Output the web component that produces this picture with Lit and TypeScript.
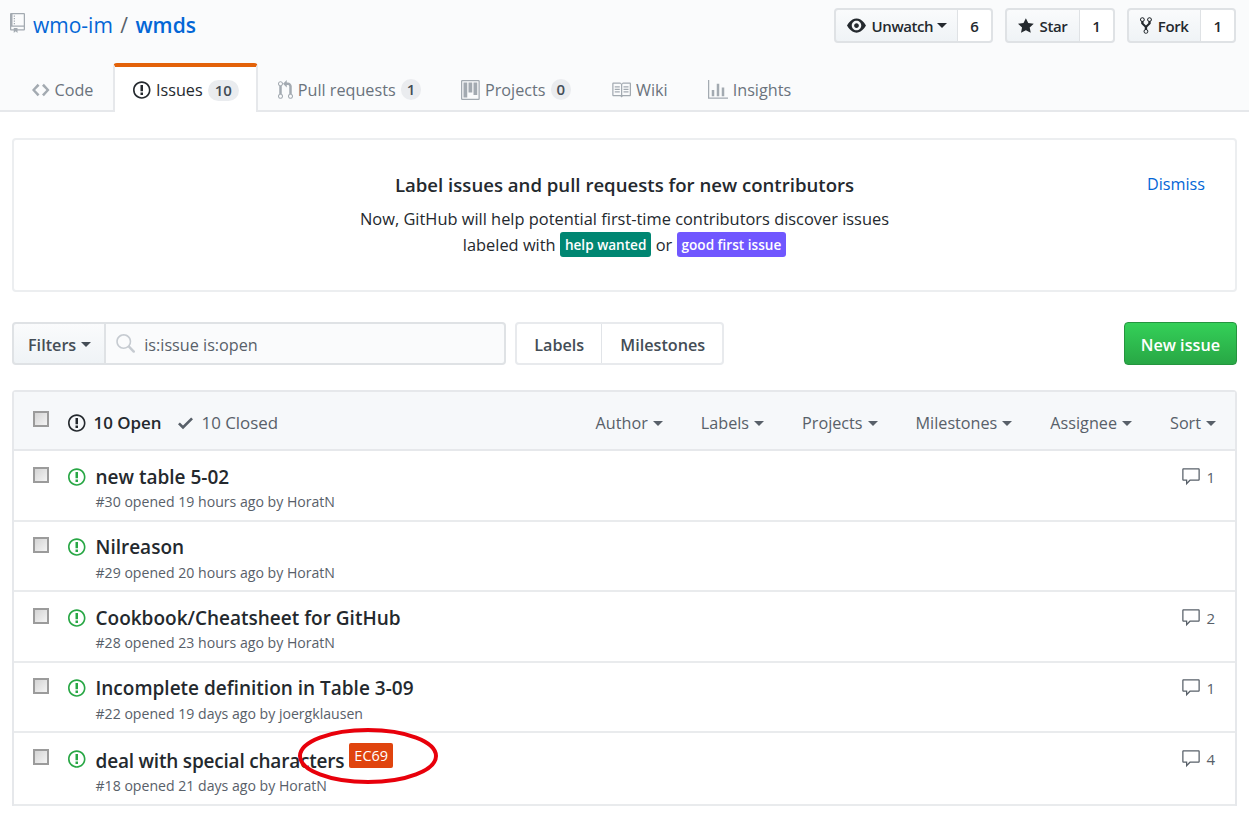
import { LitElement, html, css } from 'lit';
import { customElement } from 'lit/decorators.js';

const icons: Record<string, [number, string]> = {
  repo: [12, 'M4 9H3V8h1v1zm0-3H3v1h1V6zm0-2H3v1h1V4zm0-2H3v1h1V2zm8-1v12c0 .55-.45 1-1 1H6v2l-1.5-1.5L3 16v-2H1c-.55 0-1-.45-1-1V1c0-.55.45-1 1-1h10c.55 0 1 .45 1 1zm-1 10H1v2h2v-1h3v1h5v-2zm0-10H2v9h9V1z'],
  issue: [14, 'M7 2.3c3.14 0 5.7 2.56 5.7 5.7s-2.56 5.7-5.7 5.7A5.71 5.71 0 0 1 1.3 8c0-3.14 2.56-5.7 5.7-5.7zM7 1C3.14 1 0 4.14 0 8s3.14 7 7 7 7-3.14 7-7-3.14-7-7-7zm1 3H6v5h2V4zm0 6H6v2h2v-2z'],
  code: [14, 'M9.5 3L8 4.5 11.5 8 8 11.5 9.5 13 14 8 9.5 3zm-5 0L0 8l4.5 5L6 11.5 2.5 8 6 4.5 4.5 3z'],
  pull: [12, 'M11 11.28V5c-.03-.78-.34-1.47-.94-2.06C9.46 2.35 8.78 2.03 8 2H7V0L4 3l3 3V4h1c.27.02.48.11.69.31.21.2.3.42.31.69v6.28A1.993 1.993 0 0 0 10 15a1.993 1.993 0 0 0 1-3.72zm-1 2.92c-.66 0-1.2-.55-1.2-1.2 0-.65.55-1.2 1.2-1.2.65 0 1.2.55 1.2 1.2 0 .65-.55 1.2-1.2 1.2zM4 3c0-1.11-.89-2-2-2a1.993 1.993 0 0 0-1 3.72v6.56A1.993 1.993 0 0 0 2 15a1.993 1.993 0 0 0 1-3.72V4.72c.59-.34 1-.98 1-1.72zm-.8 10c0 .66-.55 1.2-1.2 1.2-.65 0-1.2-.55-1.2-1.2 0-.65.55-1.2 1.2-1.2.65 0 1.2.55 1.2 1.2zM2 4.2C1.34 4.2.8 3.65.8 3c0-.65.55-1.2 1.2-1.2.65 0 1.2.55 1.2 1.2 0 .65-.55 1.2-1.2 1.2z'],
  project: [15, 'M10 12h3V2h-3v10zm-4-2h3V2H6v8zm-4 4h3V2H2v12zm-1 1h13V1H1v14zM14 0H1a1 1 0 0 0-1 1v14a1 1 0 0 0 1 1h13a1 1 0 0 0 1-1V1a1 1 0 0 0-1-1z'],
  book: [16, 'M3 5h4v1H3V5zm0 3h4V7H3v1zm0 2h4V9H3v1zm11-5h-4v1h4V5zm0 2h-4v1h4V7zm0 2h-4v1h4V9zm2-6v9c0 .55-.45 1-1 1H9.5l-1 1-1-1H2c-.55 0-1-.45-1-1V3c0-.55.45-1 1-1h5.5l1 1 1-1H15c.55 0 1 .45 1 1zm-8 .5L7.5 3H2v9h6V3.5zm7-.5H9.5l-.5.5V12h6V3z'],
  graph: [16, 'M16 14v1H0V0h1v14h15zM5 13H3V8h2v5zm4 0H7V3h2v10zm4 0h-2V6h2v7z'],
  eye: [16, 'M8.06 2C3 2 0 8 0 8s3 6 8.06 6C13 14 16 8 16 8s-3-6-7.94-6zM8 12c-2.2 0-4-1.78-4-4 0-2.2 1.8-4 4-4 2.22 0 4 1.8 4 4 0 2.22-1.78 4-4 4zm2-4c0 1.11-.89 2-2 2-1.11 0-2-.89-2-2 0-1.11.89-2 2-2 1.11 0 2 .89 2 2z'],
  star: [14, 'M14 6l-4.9-.64L7 1 4.9 5.36 0 6l3.6 3.26L2.67 14 7 11.67 11.33 14l-.93-4.74L14 6z'],
  fork: [10, 'M8 1a1.993 1.993 0 0 0-1 3.72V6L5 8 3 6V4.72A1.993 1.993 0 0 0 2 1a1.993 1.993 0 0 0-1 3.72V6.5l3 3v1.78A1.993 1.993 0 0 0 5 15a1.993 1.993 0 0 0 1-3.72V9.5l3-3V4.72A1.993 1.993 0 0 0 8 1zM2 4.2C1.34 4.2.8 3.65.8 3c0-.65.55-1.2 1.2-1.2.65 0 1.2.55 1.2 1.2 0 .65-.55 1.2-1.2 1.2zm3 10c-.66 0-1.2-.55-1.2-1.2 0-.65.55-1.2 1.2-1.2.65 0 1.2.55 1.2 1.2 0 .65-.55 1.2-1.2 1.2zm3-10c-.66 0-1.2-.55-1.2-1.2 0-.65.55-1.2 1.2-1.2.65 0 1.2.55 1.2 1.2 0 .65-.55 1.2-1.2 1.2z'],
  check: [12, 'M12 5l-8 8-4-4 1.5-1.5L4 10l6.5-6.5L12 5z'],
  search: [16, 'M15.7 13.3l-3.81-3.83A5.93 5.93 0 0 0 13 6c0-3.31-2.69-6-6-6S1 2.69 1 6s2.69 6 6 6c1.3 0 2.48-.41 3.47-1.11l3.83 3.81c.19.2.45.3.7.3.25 0 .52-.09.7-.3a.996.996 0 0 0 0-1.41v.01zM7 10.7c-2.59 0-4.7-2.11-4.7-4.7 0-2.59 2.11-4.7 4.7-4.7 2.59 0 4.7 2.11 4.7 4.7 0 2.59-2.11 4.7-4.7 4.7z'],
  comment: [16, 'M14 1H2c-.55 0-1 .45-1 1v8c0 .55.45 1 1 1h2v3.5L7.5 11H14c.55 0 1-.45 1-1V2c0-.55-.45-1-1-1zm0 9H7l-2 2v-2H2V2h12v8z'],
};

const icon = (name: string, size = 20, color = 'currentColor') => {
  const [w, d] = icons[name];
  return html`<svg class="icon" width=${(w * size) / 16} height=${size} viewBox="0 0 ${w} 16" fill=${color} fill-rule="evenodd"><path d=${d}></path></svg>`;
};

const tabs = [
  { name: 'Code', ic: 'code' },
  { name: 'Issues', ic: 'issue', count: 10, active: true },
  { name: 'Pull requests', ic: 'pull', count: 1 },
  { name: 'Projects', ic: 'project', count: 0 },
  { name: 'Wiki', ic: 'book' },
  { name: 'Insights', ic: 'graph' },
];

const issues = [
  { title: 'new table 5-02', meta: '#30 opened 19 hours ago by HoratN', comments: 1 },
  { title: 'Nilreason', meta: '#29 opened 20 hours ago by HoratN' },
  { title: 'Cookbook/Cheatsheet for GitHub', meta: '#28 opened 23 hours ago by HoratN', comments: 2 },
  { title: 'Incomplete definition in Table 3-09', meta: '#22 opened 19 days ago by joergklausen', comments: 1 },
  { title: 'deal with special characters', meta: '#18 opened 21 days ago by HoratN', comments: 4, label: 'EC69' },
];

const filters = ['Author', 'Labels', 'Projects', 'Milestones', 'Assignee', 'Sort'];

@customElement('app-root')
export class AppRoot extends LitElement {
  static styles = css`
    :host {
      display: block;
      position: relative;
      height: 819px;
      overflow: hidden;
      background: #fff;
      color: #24292e;
      font-family: 'Open Sans', 'Noto Sans', sans-serif;
      font-size: 16.2px;
    }
    .icon { display: block; flex: none; }
    .head {
      height: 112px;
      box-sizing: border-box;
      background: #fafbfc;
      border-bottom: 2px solid #e6e8eb;
      padding: 8px 13px 0 10px;
    }
    .head-top {
      display: flex;
      justify-content: space-between;
      height: 55px;
    }
    .repo {
      display: flex;
      align-items: flex-start;
      font-size: 21px;
      line-height: 34px;
      color: #586069;
      white-space: pre;
    }
    .repo .icon { margin: 5px 8px 0 0; color: #a3aab1; }
    .repo a { color: #0366d6; }
    .repo .sep { margin: 0 2px; }
    .repo b { font-weight: 600; color: #0366d6; }
    .actions { display: flex; gap: 12px; }
    .btn-group { display: flex; height: 35px; font-size: 15px; }
    .btn-main {
      display: flex;
      align-items: center;
      gap: 6px;
      padding: 0 12px 0 11px;
      border: 2px solid #dfe2e5;
      border-right: 1px solid #dfe2e5;
      border-radius: 4px 0 0 4px;
      background: linear-gradient(#fafbfc, #eff3f6);
      font-weight: 600;
      letter-spacing: -0.4px;
    }
    .btn-count {
      display: flex;
      align-items: center;
      padding: 0 12px;
      border: 2px solid #dfe2e5;
      border-left: 0;
      border-radius: 0 4px 4px 0;
      background: #fff;
      font-weight: 600;
    }
    .caret {
      width: 0;
      height: 0;
      border: 5px solid transparent;
      border-top-color: currentColor;
      border-bottom: 0;
      margin-left: 5px;
    }
    .btn-main .caret { margin-left: -2px; margin-right: -2px; }
    .tabs { display: flex; height: 49px; margin-left: 2px; }
    .tab {
      display: flex;
      align-items: center;
      gap: 5px;
      padding: 4px 20px 0;
      color: #6a737d;
    }
    .tab.active {
      box-sizing: border-box;
      background: #fff;
      color: #24292e;
      border-top: 4px solid #e36209;
      border-left: 2px solid #e6e8eb;
      border-right: 2px solid #e6e8eb;
      border-radius: 4px 4px 0 0;
      padding: 1px 17px 0 18px;
      position: relative;
      z-index: 1;
    }
    .tab .icon { color: #a3aab1; }
    .tab.active .icon { color: #24292e; }
    .tab-count {
      min-width: 8px;
      padding: 0 6px;
      border-radius: 12px;
      background: #eaecef;
      color: #444d56;
      font-size: 15px;
      line-height: 21px;
      font-weight: 600;
      text-align: center;
    }
    .tab.active .tab-count { padding: 0 7px; }
    .page { padding: 26px 12px 0; }
    .banner {
      position: relative;
      height: 154px;
      box-sizing: border-box;
      border: 2px solid #eceef0;
      border-radius: 4px;
      padding-top: 31px;
      text-align: center;
    }
    .banner h2 {
      margin: 0 0 7px;
      font-size: 18.6px;
      line-height: 28px;
      font-weight: 600;
    }
    .banner p { margin: 0; font-size: 16.4px; line-height: 26px; }
    .dismiss {
      position: absolute;
      top: 33px;
      right: 30px;
      color: #0366d6;
    }
    .chip {
      display: inline-block;
      padding: 0 5px;
      border-radius: 3px;
      color: #fff;
      font-size: 13.6px;
      line-height: 25px;
      font-weight: 600;
      vertical-align: 1px;
    }
    .toolbar {
      display: flex;
      justify-content: space-between;
      height: 43px;
      margin: 30px 0 25px;
    }
    .tool-left { display: flex; }
    .filter-btn {
      display: flex;
      align-items: center;
      padding: 2px 13px 0 14px;
      border: 2px solid #dfe2e5;
      border-radius: 4px 0 0 4px;
      background: linear-gradient(#fafbfc, #eff3f6);
      font-weight: 600;
      color: #444d56;
    }
    .search {
      display: flex;
      align-items: center;
      gap: 9px;
      width: 400px;
      box-sizing: border-box;
      padding-left: 9px;
      border: 2px solid #dfe2e5;
      border-left: 0;
      border-radius: 0 4px 4px 0;
      color: #586069;
      background: #fafbfc;
    }
    .search span { padding-top: 2px; }
    .nav {
      display: flex;
      margin-left: 9px;
      border: 2px solid #e8eaed;
      border-radius: 4px;
      color: #444d56;
      font-weight: 600;
    }
    .nav span { display: flex; align-items: center; padding: 2px 17px 0; }
    .nav span + span { border-left: 1px solid #e1e4e8; padding: 2px 17px 0 18px; }
    .new-issue {
      display: flex;
      align-items: center;
      padding: 2px 16px 0;
      border-radius: 4px;
      background: linear-gradient(#34d058, #28a745);
      border: 1px solid #25953f;
      color: #fff;
      font-weight: 600;
    }
    .list {
      border: 2px solid #e6e8eb;
      border-bottom: 0;
      border-radius: 4px 4px 0 0;
    }
    .list-head {
      display: flex;
      align-items: center;
      height: 59px;
      box-sizing: border-box;
      padding: 5px 19px 0;
      background: #f6f8fa;
      border-bottom: 2px solid #e6e8eb;
    }
    .box {
      width: 16px;
      height: 16px;
      box-sizing: border-box;
      flex: none;
      border: 2px solid #9b9b9b;
      background: linear-gradient(135deg, #d4d4d4, #f4f4f4);
    }
    .list-head .box { margin-top: -8px; }
    .states { display: flex; align-items: center; margin: -1px 0 0 19px; font-size: 16.9px; }
    .states .open { display: flex; align-items: center; gap: 8px; font-weight: 600; }
    .states .closed { display: flex; align-items: center; gap: 8px; margin-left: 17px; color: #586069; }
    .filters {
      display: flex;
      gap: 38px;
      margin-left: auto;
      color: #586069;
    }
    .filters span { display: flex; align-items: center; }
    .row {
      display: flex;
      box-sizing: border-box;
      height: 70.5px;
      padding: 12.5px 20px 0 19px;
      border-bottom: 2px solid #e9ebed;
    }
    .row.labeled { height: 73px; }
    .row.labeled .body { margin-top: 2px; }
    .row.labeled .title { letter-spacing: -0.2px; }
    .row .box { margin-top: 3px; }
    .row .state { margin: 3px 10px 0 19px; }
    .title-line { display: flex; align-items: flex-start; }
    .title { font-size: 19px; line-height: 26px; font-weight: 600; }
    .label {
      margin: -5px 0 0 5px;
      padding: 0 5px;
      background: #e0440e;
      color: #fff;
      font-size: 14.5px;
      line-height: 25px;
      border-radius: 2px;
    }
    .meta { margin-top: 1.5px; font-size: 14.1px; line-height: 22px; color: #586069; }
    .comments {
      display: flex;
      align-items: center;
      gap: 5px;
      align-self: flex-start;
      margin: 3px 0 0 auto;
      color: #586069;
      font-size: 15px;
    }
    .ring { position: absolute; left: 297px; top: 727px; pointer-events: none; }
  `;

  render() {
    return html`
      <div class="head">
        <div class="head-top">
          <div class="repo">${icon('repo', 20)}<a>wmo-im</a><span class="sep"> / </span><b>wmds</b></div>
          <div class="actions">
            <div class="btn-group">
              <div class="btn-main">${icon('eye', 19)} Unwatch<span class="caret"></span></div>
              <div class="btn-count">6</div>
            </div>
            <div class="btn-group">
              <div class="btn-main">${icon('star', 18)} Star</div>
              <div class="btn-count">1</div>
            </div>
            <div class="btn-group">
              <div class="btn-main">${icon('fork', 19)} Fork</div>
              <div class="btn-count">1</div>
            </div>
          </div>
        </div>
        <div class="tabs">
          ${tabs.map(
            (t) => html`<div class="tab ${t.active ? 'active' : ''}">
              ${icon(t.ic, 20)}<span>${t.name}</span>
              ${t.count !== undefined ? html`<span class="tab-count">${t.count}</span>` : ''}
            </div>`
          )}
        </div>
      </div>
      <div class="page">
        <div class="banner">
          <h2>Label issues and pull requests for new contributors</h2>
          <p>
            Now, GitHub will help potential first-time contributors discover issues<br />
            labeled with
            <span class="chip" style="background:#008672">help wanted</span> or
            <span class="chip" style="background:#7057ff">good first issue</span>
          </p>
          <span class="dismiss">Dismiss</span>
        </div>
        <div class="toolbar">
          <div class="tool-left">
            <div class="filter-btn">Filters<span class="caret"></span></div>
            <div class="search">${icon('search', 20, '#c6cbd1')}<span>is:issue is:open</span></div>
            <div class="nav"><span>Labels</span><span>Milestones</span></div>
          </div>
          <div class="new-issue">New issue</div>
        </div>
        <div class="list">
          <div class="list-head">
            <span class="box"></span>
            <div class="states">
              <span class="open">${icon('issue', 20)}10 Open</span>
              <span class="closed">${icon('check', 20)}10 Closed</span>
            </div>
            <div class="filters">
              ${filters.map((f) => html`<span>${f}<span class="caret"></span></span>`)}
            </div>
          </div>
          ${issues.map(
            (i) => html`<div class="row ${i.label ? 'labeled' : ''}">
              <span class="box"></span>
              <span class="state">${icon('issue', 20, '#28a745')}</span>
              <div class="body">
                <div class="title-line">
                  <span class="title">${i.title}</span>
                  ${i.label ? html`<span class="label">${i.label}</span>` : ''}
                </div>
                <div class="meta">${i.meta}</div>
              </div>
              ${i.comments
                ? html`<div class="comments">${icon('comment', 20)}<span>${i.comments}</span></div>`
                : ''}
            </div>`
          )}
        </div>
      </div>
      <svg class="ring" width="144" height="60" viewBox="0 0 144 60">
        <ellipse cx="71" cy="29" rx="68" ry="26" fill="none" stroke="#e8000b" stroke-width="4"></ellipse>
      </svg>
    `;
  }
}
